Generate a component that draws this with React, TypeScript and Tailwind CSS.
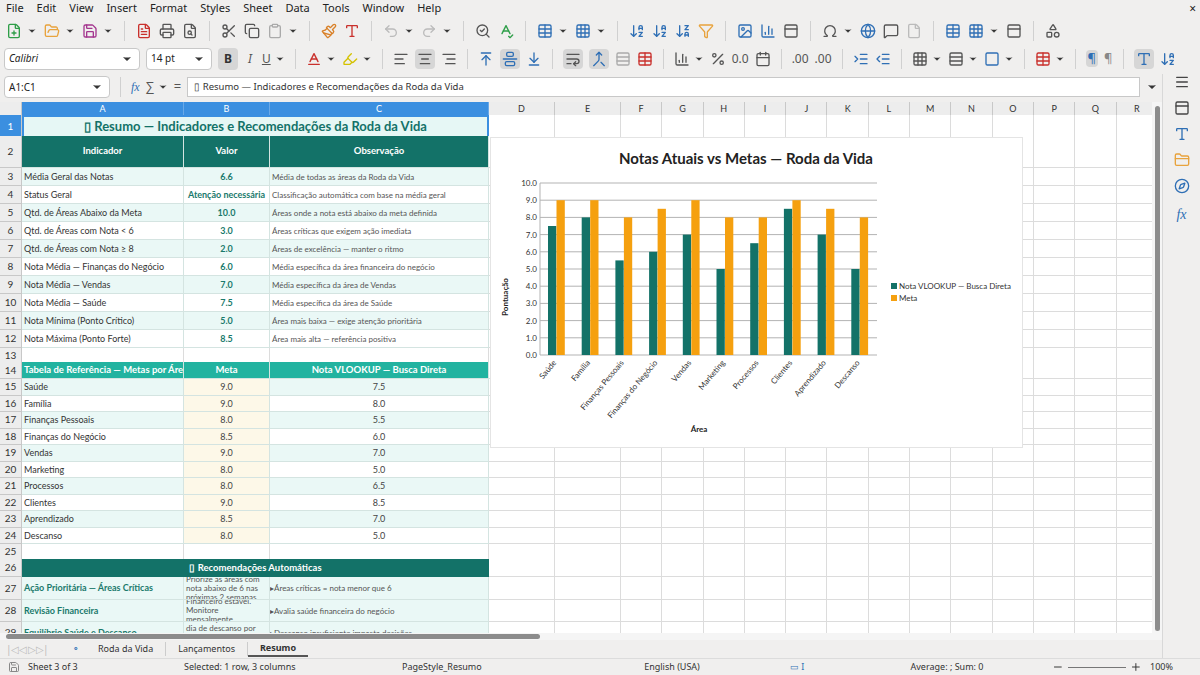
import {
  FilePlus, FolderOpen, Save, FileText, Printer, FileSearch, Scissors, Copy, Clipboard, Paintbrush,
  Undo2, Redo2, SearchCheck, SpellCheck, Table, Grid3x3, ArrowDownAZ, ArrowDownZA, Filter, Image,
  BarChart3, Omega, Globe, MessageSquare, File, PanelTop, Shapes, AlignLeft, AlignCenter, AlignRight,
  ArrowUpToLine, AlignVerticalJustifyCenter, ArrowDownToLine, WrapText, Merge, Percent, Calendar,
  IndentIncrease, IndentDecrease, Square, Menu, Type, FolderClosed, Compass, ChevronDown,
  Baseline, Highlighter, Rows3, Minus, Plus,
} from "lucide-react";

const COLS = ["22px", "162px", "86px", "219px", "66px", "66px", ...Array(13).fill("41.3px")].join(" ");
const LETTERS = ["A", "B", "C", "D", "E", "F", "G", "H", "I", "J", "K", "L", "M", "N", "O", "P", "Q", "R"];

type Row = {
  n: number;
  h: number;
  kind: "title" | "head" | "data" | "empty" | "head2" | "ref" | "rec" | "head3";
  a?: string;
  b?: string;
  c?: string;
  alt?: boolean;
};

const rows: Row[] = [
  { n: 1, h: 21, kind: "title" },
  { n: 2, h: 32, kind: "head", a: "Indicador", b: "Valor", c: "Observação" },
  { n: 3, h: 18, kind: "data", a: "Média Geral das Notas", b: "6.6", c: "Média de todas as áreas da Roda da Vida", alt: true },
  { n: 4, h: 18, kind: "data", a: "Status Geral", b: "Atenção necessária", c: "Classificação automática com base na média geral" },
  { n: 5, h: 18, kind: "data", a: "Qtd. de Áreas Abaixo da Meta", b: "10.0", c: "Áreas onde a nota está abaixo da meta definida", alt: true },
  { n: 6, h: 18, kind: "data", a: "Qtd. de Áreas com Nota < 6", b: "3.0", c: "Áreas críticas que exigem ação imediata" },
  { n: 7, h: 18, kind: "data", a: "Qtd. de Áreas com Nota ≥ 8", b: "2.0", c: "Áreas de excelência — manter o ritmo", alt: true },
  { n: 8, h: 18, kind: "data", a: "Nota Média — Finanças do Negócio", b: "6.0", c: "Média específica da área financeira do negócio" },
  { n: 9, h: 18, kind: "data", a: "Nota Média — Vendas", b: "7.0", c: "Média específica da área de Vendas", alt: true },
  { n: 10, h: 18, kind: "data", a: "Nota Média — Saúde", b: "7.5", c: "Média específica da área de Saúde" },
  { n: 11, h: 18, kind: "data", a: "Nota Mínima (Ponto Crítico)", b: "5.0", c: "Área mais baixa — exige atenção prioritária", alt: true },
  { n: 12, h: 18, kind: "data", a: "Nota Máxima (Ponto Forte)", b: "8.5", c: "Área mais alta — referência positiva" },
  { n: 13, h: 14, kind: "empty" },
  { n: 14, h: 17, kind: "head2", a: "Tabela de Referência — Metas por Área", b: "Meta", c: "Nota VLOOKUP — Busca Direta" },
];

const ref: [string, string, string][] = [
  ["Saúde", "9.0", "7.5"], ["Família", "9.0", "8.0"], ["Finanças Pessoais", "8.0", "5.5"],
  ["Finanças do Negócio", "8.5", "6.0"], ["Vendas", "9.0", "7.0"], ["Marketing", "8.0", "5.0"],
  ["Processos", "8.0", "6.5"], ["Clientes", "9.0", "8.5"], ["Aprendizado", "8.5", "7.0"], ["Descanso", "8.0", "5.0"],
];
ref.forEach(([a, b, c], i) => rows.push({ n: 15 + i, h: 16.5, kind: "ref", a, b, c, alt: i % 2 === 0 }));
rows.push({ n: 25, h: 15, kind: "empty" });
rows.push({ n: 26, h: 18, kind: "head3" });
rows.push({ n: 27, h: 23, kind: "rec", a: "Ação Prioritária — Áreas Críticas", b: "Priorize as áreas com nota abaixo de 6 nas próximas 2 semanas.", c: "Áreas críticas = nota menor que 6" });
rows.push({ n: 28, h: 22, kind: "rec", a: "Revisão Financeira", b: "Financeiro estável. Monitore mensalmente.", c: "Avalia saúde financeira do negócio" });
rows.push({ n: 29, h: 22, kind: "rec", a: "Equilíbrio Saúde e Descanso", b: "Reserve pelo menos 1 dia de descanso por semana. Empreendedores", c: "Descanso insuficiente impacta decisões" });

function RowHead({ n }: { n: number }) {
  return (
    <div className={`flex items-center justify-center border-r border-b border-[#c8c8c8] text-[10px] ${n === 1 ? "bg-[#3b8fe0] text-white" : "bg-[#ededed] text-[#333]"}`}>
      {n}
    </div>
  );
}

function Blank({ count }: { count: number }) {
  return (
    <>
      {Array.from({ length: count }).map((_, i) => (
        <div key={i} className="border-r border-b border-[#dcdcdc] bg-white" />
      ))}
    </>
  );
}

function SheetRow({ r }: { r: Row }) {
  const cell = "border-r border-b border-[#d4e4e1] overflow-hidden whitespace-nowrap flex items-center";
  let abc: React.ReactNode;
  if (r.kind === "title") {
    abc = (
      <div className="col-span-3 flex items-center justify-center bg-[#e6f7f5] border-2 border-[#3b8fe0] text-[13px] font-bold text-[#137268]">
        ▯ Resumo — Indicadores e Recomendações da Roda da Vida
      </div>
    );
  } else if (r.kind === "head" || r.kind === "head2") {
    const bg = r.kind === "head" ? "bg-[#137268]" : "bg-[#22b3a0]";
    abc = (
      <>
        <div className={`${cell} ${bg} font-bold text-white text-[9.5px] ${r.kind === "head" ? "justify-center" : "pl-0.5"} border-[#5aa79e]`}>{r.a}</div>
        <div className={`${cell} ${bg} font-bold text-white text-[9.5px] justify-center border-[#5aa79e]`}>{r.b}</div>
        <div className={`${cell} ${bg} font-bold text-white text-[9.5px] justify-center border-[#5aa79e]`}>{r.c}</div>
      </>
    );
  } else if (r.kind === "head3") {
    abc = (
      <div className="col-span-3 flex items-center justify-center bg-[#137268] text-white font-bold text-[9.5px]">
        ▯ Recomendações Automáticas
      </div>
    );
  } else if (r.kind === "data") {
    const bg = r.alt ? "bg-[#eaf8f6]" : "bg-white";
    abc = (
      <>
        <div className={`${cell} ${bg} pl-0.5 text-[9px] text-[#333]`}>{r.a}</div>
        <div className={`${cell} ${bg} justify-center text-[9px] font-bold text-[#1a7a6c]`}>{r.b}</div>
        <div className={`${cell} ${bg} pl-0.5 text-[8px] text-[#555]`}>{r.c}</div>
      </>
    );
  } else if (r.kind === "ref") {
    const bg = r.alt ? "bg-[#eaf8f6]" : "bg-white";
    abc = (
      <>
        <div className={`${cell} ${bg} pl-0.5 text-[9px] text-[#333]`}>{r.a}</div>
        <div className={`${cell} bg-[#fdf8e8] justify-center text-[9px] text-[#444]`}>{r.b}</div>
        <div className={`${cell} ${bg} justify-center text-[9px] text-[#444]`}>{r.c}</div>
      </>
    );
  } else if (r.kind === "rec") {
    abc = (
      <>
        <div className={`${cell} bg-[#eaf8f6] pl-0.5 text-[9px] font-bold text-[#1a7a6c]`}>{r.a}</div>
        <div className="border-r border-b border-[#d4e4e1] overflow-hidden bg-[#eaf8f6] flex items-center leading-[9px] text-[8px] text-[#555] pl-0.5">
          <span className="block">{r.b}</span>
        </div>
        <div className={`${cell} bg-[#eaf8f6] text-[8px] text-[#555]`}>▸{r.c}</div>
      </>
    );
  } else {
    abc = <Blank count={3} />;
  }
  return (
    <div className="grid" style={{ gridTemplateColumns: COLS, height: r.h }}>
      <RowHead n={r.n} />
      {abc}
      <Blank count={15} />
    </div>
  );
}

const chartData = [
  ["Saúde", 7.5, 9], ["Família", 8, 9], ["Finanças Pessoais", 5.5, 8], ["Finanças do Negócio", 6, 8.5],
  ["Vendas", 7, 9], ["Marketing", 5, 8], ["Processos", 6.5, 8], ["Clientes", 8.5, 9],
  ["Aprendizado", 7, 8.5], ["Descanso", 5, 8],
] as const;

function Chart() {
  const x0 = 50, x1 = 387, yTop = 46, yBot = 218;
  const gw = (x1 - x0) / 10;
  const y = (v: number) => yBot - (v / 10) * (yBot - yTop);
  return (
    <svg width="533" height="311" className="absolute left-[490px] top-[35px] bg-white" style={{ fontFamily: "Lato, sans-serif" }}>
      <rect x="0.5" y="0.5" width="532" height="310" fill="white" stroke="#e4e4e4" />
      <text x="256" y="27" textAnchor="middle" fontSize="15" fontWeight="bold" fill="#222">Notas Atuais vs Metas — Roda da Vida</text>
      {Array.from({ length: 11 }).map((_, i) => (
        <g key={i}>
          <line x1={x0} x2={x1} y1={y(i)} y2={y(i)} stroke="#b3b3b3" strokeWidth="1" />
          <text x={x0 - 3} y={y(i) + 3} textAnchor="end" fontSize="8" fill="#333">{i.toFixed(1)}</text>
        </g>
      ))}
      <line x1={x0} x2={x0} y1={yTop} y2={yBot} stroke="#b3b3b3" />
      {chartData.map(([name, v, m], i) => {
        const gx = x0 + i * gw;
        const cx = gx + gw / 2;
        return (
          <g key={name}>
            <rect x={gx + 8} y={y(v)} width="8.3" height={yBot - y(v)} fill="#137268" />
            <rect x={gx + 16.5} y={y(m)} width="8.3" height={yBot - y(m)} fill="#f5a00f" />
            <text x={cx} y={yBot + 8} textAnchor="end" fontSize="8" fill="#333" transform={`rotate(-50 ${cx} ${yBot + 8})`}>{name}</text>
          </g>
        );
      })}
      <text x="18" y="160" fontSize="8" fontWeight="bold" fill="#222" textAnchor="middle" transform="rotate(-90 18 160)">Pontuação</text>
      <text x="209" y="295" fontSize="8" fontWeight="bold" fill="#222" textAnchor="middle">Área</text>
      <rect x="401" y="146" width="6" height="6" fill="#137268" />
      <text x="409" y="152" fontSize="8" fill="#333">Nota VLOOKUP — Busca Direta</text>
      <rect x="401" y="158" width="6" height="6" fill="#f5a00f" />
      <text x="409" y="164" fontSize="8" fill="#333">Meta</text>
    </svg>
  );
}

function Dd() {
  return <ChevronDown className="w-2.5 h-2.5 text-[#333] -ml-0.5" fill="#333" />;
}
function Sep() {
  return <div className="w-px h-5 bg-[#d0d0d0] mx-1" />;
}

export default function App() {
  const ic = "w-[16px] h-[16px]";
  return (
    <div className="w-[1200px] h-[675px] overflow-hidden bg-[#f0efee] flex flex-col text-[#222]" style={{ fontFamily: "'Noto Sans', 'Open Sans', sans-serif" }}>
      {/* menu */}
      <div className="h-[17px] flex items-center gap-[13px] px-[6px] text-[11px] relative">
        {["File", "Edit", "View", "Insert", "Format", "Styles", "Sheet", "Data", "Tools", "Window", "Help"].map((m) => (
          <span key={m}>{m}</span>
        ))}
        <span className="absolute right-[4px] text-[12px]">×</span>
      </div>
      {/* toolbar 1 */}
      <div className="h-[28px] flex items-center gap-[7px] px-[6px] text-[#555]">
        <FilePlus className={`${ic} text-[#2e9e48]`} /><Dd />
        <FolderOpen className={`${ic} text-[#e8a33d]`} /><Dd />
        <Save className={`${ic} text-[#a4368f]`} /><Dd />
        <Sep />
        <FileText className={`${ic} text-[#c9302c]`} /><Printer className={ic} /><FileSearch className={ic} />
        <Sep />
        <Scissors className={ic} /><Copy className={ic} /><Clipboard className={`${ic} text-[#aaa]`} /><Dd />
        <Sep />
        <Paintbrush className={`${ic} text-[#d9822b]`} /><Type className={`${ic} text-[#c9302c]`} />
        <Sep />
        <Undo2 className={`${ic} text-[#bbb]`} /><Dd /><Redo2 className={`${ic} text-[#bbb]`} /><Dd />
        <Sep />
        <SearchCheck className={ic} /><SpellCheck className={`${ic} text-[#2e9e48]`} />
        <Sep />
        <Table className={`${ic} text-[#2f6fb5]`} /><Dd /><Grid3x3 className={`${ic} text-[#2f6fb5]`} /><Dd />
        <Sep />
        <ArrowDownAZ className={`${ic} text-[#2f6fb5]`} /><ArrowDownAZ className={`${ic} text-[#2f6fb5]`} /><ArrowDownZA className={`${ic} text-[#2f6fb5]`} /><Filter className={`${ic} text-[#e8a33d]`} />
        <Sep />
        <Image className={`${ic} text-[#2f6fb5]`} /><BarChart3 className={`${ic} text-[#2f6fb5]`} /><PanelTop className={ic} />
        <Sep />
        <Omega className={ic} /><Dd /><Globe className={`${ic} text-[#2f6fb5]`} /><MessageSquare className={ic} /><File className={`${ic} text-[#bbb]`} />
        <Sep />
        <Table className={`${ic} text-[#2f6fb5]`} /><Grid3x3 className={`${ic} text-[#2f6fb5]`} /><Dd /><PanelTop className={ic} />
        <Sep />
        <Shapes className={ic} />
      </div>
      {/* toolbar 2 */}
      <div className="h-[27px] flex items-center gap-[6px] px-[4px] text-[#555]">
        <div className="w-[136px] h-[22px] bg-white border border-[#c8c8c8] rounded-sm flex items-center justify-between pl-1 pr-1.5 text-[10px] italic text-[#222]">
          Calibri <ChevronDown className="w-3 h-3 not-italic" fill="#333" />
        </div>
        <div className="w-[66px] h-[22px] bg-white border border-[#c8c8c8] rounded-sm flex items-center justify-between pl-1 pr-1.5 text-[10px] text-[#222]">
          14 pt <ChevronDown className="w-3 h-3" fill="#333" />
        </div>
        <span className="w-[20px] h-[22px] rounded bg-[#d6d6d6] flex items-center justify-center font-bold text-[12px] text-[#333]">B</span>
        <span className="italic text-[12px] px-1">I</span>
        <span className="underline text-[12px]">U</span><Dd />
        <Sep />
        <Baseline className={`${ic} text-[#c9302c]`} /><Dd />
        <Highlighter className={`${ic} text-[#d4c200]`} /><Dd />
        <Sep />
        <AlignLeft className={ic} />
        <span className="bg-[#d6d6d6] rounded p-0.5"><AlignCenter className={ic} /></span>
        <AlignRight className={ic} />
        <Sep />
        <ArrowUpToLine className={`${ic} text-[#2f6fb5]`} />
        <span className="bg-[#d6d6d6] rounded p-0.5"><AlignVerticalJustifyCenter className={`${ic} text-[#2f6fb5]`} /></span>
        <ArrowDownToLine className={`${ic} text-[#2f6fb5]`} />
        <Sep />
        <span className="bg-[#d6d6d6] rounded p-0.5"><WrapText className={ic} /></span>
        <span className="bg-[#d6d6d6] rounded p-0.5"><Merge className={`${ic} text-[#2f6fb5]`} /></span>
        <Rows3 className={`${ic} text-[#aaa]`} /><Table className={`${ic} text-[#c9302c]`} />
        <Sep />
        <BarChart3 className={ic} /><Dd />
        <Percent className={ic} /><span className="text-[12px]">0.0</span><Calendar className={ic} />
        <Sep />
        <span className="text-[12px]">.00</span><span className="text-[12px]">.00</span>
        <Sep />
        <IndentIncrease className={`${ic} text-[#2f6fb5]`} /><IndentDecrease className={`${ic} text-[#2f6fb5]`} />
        <Sep />
        <Grid3x3 className={ic} /><Dd /><Rows3 className={ic} /><Dd /><Square className={`${ic} text-[#2f6fb5]`} /><Dd />
        <Sep />
        <Table className={`${ic} text-[#c9302c]`} /><Dd />
        <Sep />
        <span className="bg-[#d6d6d6] rounded p-0.5 text-[13px] text-[#2f6fb5] leading-none">¶</span>
        <span className="text-[13px] text-[#888]">¶</span>
        <Sep />
        <span className="bg-[#d6d6d6] rounded p-0.5"><Type className={`${ic} text-[#2f6fb5]`} /></span>
        <ArrowDownAZ className={`${ic} text-[#2f6fb5]`} />
      </div>
      {/* formula bar */}
      <div className="h-[30px] flex items-center pl-[4px] pr-[42px] gap-1.5">
        <div className="w-[106px] h-[22px] bg-white border border-[#c8c8c8] rounded-sm flex items-center justify-between pl-1 pr-1.5 text-[10px]">
          A1:C1 <ChevronDown className="w-3 h-3" fill="#333" />
        </div>
        <Sep />
        <span className="italic text-[#2f6fb5] text-[12px]" style={{ fontFamily: "'Liberation Serif', serif" }}>fx</span>
        <span className="text-[13px] text-[#555]">∑</span><Dd />
        <span className="text-[13px] text-[#555]">=</span>
        <div className="flex-1 h-[20px] bg-white border border-[#c8c8c8] flex items-center pl-1.5 text-[9.5px] text-[#333]">
          ▯ Resumo — Indicadores e Recomendações da Roda da Vida
        </div>
        <ChevronDown className="w-3 h-3" fill="#333" />
      </div>
      {/* body */}
      <div className="flex flex-1 min-h-0">
        <div className="w-[1162px] flex flex-col min-h-0">
          <div className="flex flex-1 min-h-0">
            <div className="w-[1152px] relative overflow-hidden bg-white" style={{ fontFamily: "Lato, 'Liberation Sans', sans-serif" }}>
              <div className="grid h-[13px] text-[9px]" style={{ gridTemplateColumns: COLS }}>
                <div className="bg-[#ededed] border-r border-b border-[#c8c8c8]" />
                {LETTERS.map((l, i) => (
                  <div key={l} className={`flex items-center justify-center border-r border-b ${i < 3 ? "bg-[#3b8fe0] text-white border-[#6aa9e8]" : "bg-[#ededed] text-[#333] border-[#c8c8c8]"}`}>
                    {l}
                  </div>
                ))}
              </div>
              {rows.map((r) => (
                <SheetRow key={r.n} r={r} />
              ))}
              <Chart />
            </div>
            <div className="w-[10px] bg-[#f5f5f5] flex justify-center pt-1">
              <div className="w-[5px] h-[525px] bg-[#8c8c8c] rounded" />
            </div>
          </div>
          <div className="h-[7px] bg-[#f5f5f5] pl-[6px] flex items-center">
            <div className="w-[534px] h-[5px] bg-[#8c8c8c] rounded" />
          </div>
          {/* tabs */}
          <div className="h-[18px] flex items-center text-[9px] text-[#333] pl-[6px]">
            <span className="text-[#bbb] tracking-tighter text-[10px] w-[60px]">|◁◁ ▷▷|</span>
            <span className="text-[#2f6fb5] w-[20px] text-center">⚬</span>
            <span className="px-3 border-r border-[#ccc]">Roda da Vida</span>
            <span className="px-3 border-r border-[#ccc]">Lançamentos</span>
            <span className="px-3 font-bold border-b-2 border-[#555]">Resumo</span>
          </div>
        </div>
        {/* sidebar */}
        <div className="w-[38px] border-l border-[#d8d8d8] flex flex-col items-center gap-[10px] -mt-[28px] text-[#444] bg-[#f0efee]">
          <Menu className="w-4 h-4" />
          <PanelTop className="w-4 h-4" />
          <Type className="w-4 h-4 text-[#2f6fb5]" />
          <FolderClosed className="w-4 h-4 text-[#e8a33d]" />
          <Compass className="w-4 h-4 text-[#2f6fb5]" />
          <span className="italic text-[#2f6fb5] text-[14px]" style={{ fontFamily: "'Liberation Serif', serif" }}>fx</span>
        </div>
      </div>
      {/* status */}
      <div className="h-[17px] flex items-center text-[9px] text-[#333] border-t border-[#dcdcdc]">
        <span className="w-[162px] pl-[8px] flex items-center gap-2"><Save className="w-3 h-3 text-[#888]" />Sheet 3 of 3</span>
        <span className="w-[230px] pl-[22px]">Selected: 1 row, 3 columns</span>
        <span className="w-[200px] pl-[10px]">PageStyle_Resumo</span>
        <span className="w-[160px] text-center">English (USA)</span>
        <span className="w-[90px] text-center text-[#2f6fb5]">▭ I</span>
        <span className="w-[210px] text-center">Average: ; Sum: 0</span>
        <span className="flex items-center gap-1 w-[90px]"><Minus className="w-3 h-3" /><div className="w-[60px] h-px bg-[#777]" /><Plus className="w-3 h-3" /></span>
        <span className="pl-2">100%</span>
      </div>
    </div>
  );
}
